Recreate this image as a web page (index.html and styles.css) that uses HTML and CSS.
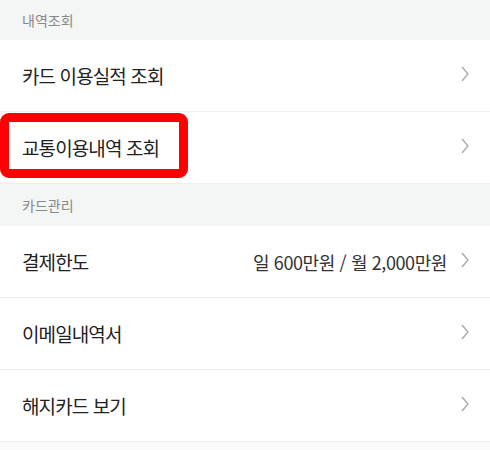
FILE: index.html
```html
<!DOCTYPE html>
<html lang="ko">
<head>
<meta charset="utf-8">
<link rel="stylesheet" href="styles.css">
</head>
<body>
<div class="page">
  <div class="section-title">내역조회</div>
  <div class="row"><span class="label">카드 이용실적 조회</span><span class="right"><svg class="chev" width="8" height="16" viewBox="0 0 8 16"><polyline points="1,1 7,8 1,15" fill="none" stroke="#a8a8a8" stroke-width="1.3"/></svg></span></div>
  <div class="row"><span class="label highlight">교통이용내역 조회</span><span class="right"><svg class="chev" width="8" height="16" viewBox="0 0 8 16"><polyline points="1,1 7,8 1,15" fill="none" stroke="#a8a8a8" stroke-width="1.3"/></svg></span></div>
  <div class="section-title second">카드관리</div>
  <div class="row"><span class="label">결제한도</span><span class="right"><span class="value">일 600만원 / 월 2,000만원</span><svg class="chev" width="8" height="16" viewBox="0 0 8 16"><polyline points="1,1 7,8 1,15" fill="none" stroke="#a8a8a8" stroke-width="1.3"/></svg></span></div>
  <div class="row"><span class="label">이메일내역서</span><span class="right"><svg class="chev" width="8" height="16" viewBox="0 0 8 16"><polyline points="1,1 7,8 1,15" fill="none" stroke="#a8a8a8" stroke-width="1.3"/></svg></span></div>
  <div class="row"><span class="label">해지카드 보기</span><span class="right"><svg class="chev" width="8" height="16" viewBox="0 0 8 16"><polyline points="1,1 7,8 1,15" fill="none" stroke="#a8a8a8" stroke-width="1.3"/></svg></span></div>
  <div class="bottom"></div>
</div>
</body>
</html>
```
FILE: styles.css
```css
html, body {
  margin: 0;
  padding: 0;
  background: #ffffff;
}
body {
  font-family: "Noto Sans CJK KR", "Noto Sans", sans-serif;
  color: #222222;
}
.page {
  width: 490px;
  height: 450px;
  overflow: hidden;
  display: flex;
  flex-direction: column;
}
.section-title {
  height: 40px;
  background: #f4f5f5;
  color: #888888;
  font-size: 14px;
  display: flex;
  align-items: center;
  padding-left: 22px;
  flex-shrink: 0;
}
.section-title.second {
  height: 42px;
}
.row {
  height: 71px;
  border-bottom: 1px solid #eeeeee;
  display: flex;
  align-items: center;
  justify-content: space-between;
  padding: 0 21px 0 22px;
  flex-shrink: 0;
  position: relative;
}
.label {
  font-size: 19px;
  letter-spacing: -0.9px;
  color: #222222;
}
.highlight {
  position: relative;
}
.highlight::before {
  content: "";
  position: absolute;
  left: -22px;
  top: -21px;
  width: 170px;
  height: 47px;
  border: 9px solid #ff0000;
  border-radius: 9px;
}
.right {
  display: flex;
  align-items: center;
  gap: 14px;
}
.value {
  font-size: 18px;
  color: #333333;
  letter-spacing: -0.4px;
}
.chev {
  display: block;
  margin-top: -3px;
}
.bottom {
  flex: 1;
  background: #fafafa;
}
```
